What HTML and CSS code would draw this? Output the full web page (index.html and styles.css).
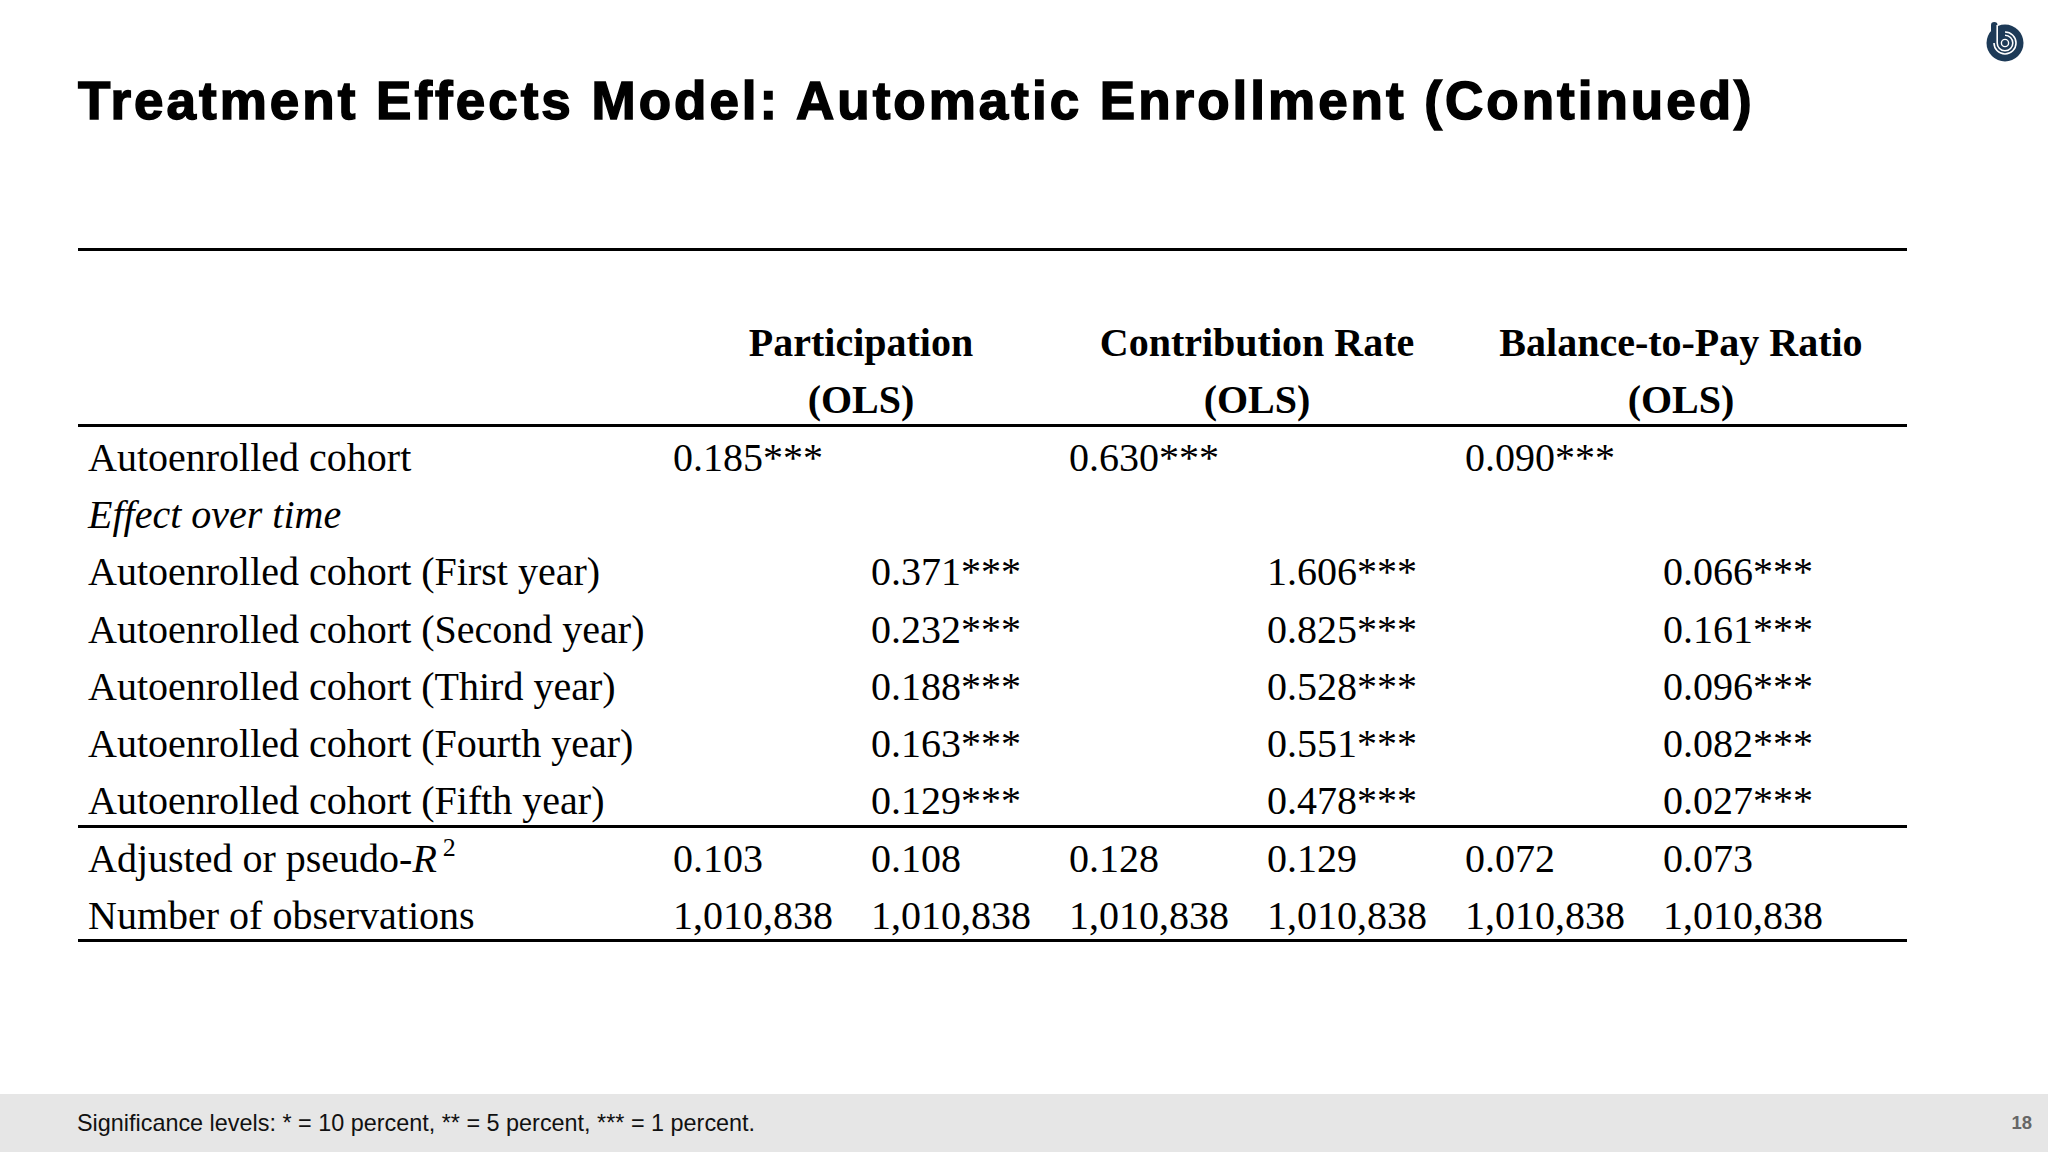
FILE: index.html
```html
<!DOCTYPE html>
<html lang="en">
<head>
<meta charset="utf-8">
<title>Treatment Effects Model: Automatic Enrollment (Continued)</title>
<link rel="stylesheet" href="styles.css">
</head>
<body>
<div class="slide">
  <header class="top">
    <h1 class="title">Treatment Effects Model: Automatic Enrollment (Continued)</h1>
    <svg class="logo" viewBox="0 0 44 48" width="44" height="48" aria-label="logo">
      <rect x="7" y="6" width="6.5" height="24" rx="3.2" fill="#1d3a57"/>
      <circle cx="21" cy="27" r="18.5" fill="#1d3a57"/>
      <path d="M13.2 9 L13.2 27 A7.8 7.8 0 1 0 21 19.2" fill="none" stroke="#ffffff" stroke-width="1.6"/>
      <path d="M10 27 A11 11 0 1 0 21 16" fill="none" stroke="#ffffff" stroke-width="1.6"/>
      <circle cx="21" cy="27" r="3.6" fill="none" stroke="#ffffff" stroke-width="1.4"/>
    </svg>
  </header>

  <main class="content">
    <div class="reg-table">
      <div class="thead">
        <div class="hcell c-part">Participation<br>(OLS)</div>
        <div class="hcell c-contrib">Contribution Rate<br>(OLS)</div>
        <div class="hcell c-bal">Balance-to-Pay Ratio<br>(OLS)</div>
      </div>
      <div class="tbody">
        <div class="row">
          <div class="cell">Autoenrolled cohort</div>
          <div class="cell">0.185***</div><div class="cell"></div>
          <div class="cell">0.630***</div><div class="cell"></div>
          <div class="cell">0.090***</div><div class="cell"></div>
        </div>
        <div class="row">
          <div class="cell"><em>Effect over time</em></div>
        </div>
        <div class="row">
          <div class="cell">Autoenrolled cohort (First year)</div>
          <div class="cell"></div><div class="cell">0.371***</div>
          <div class="cell"></div><div class="cell">1.606***</div>
          <div class="cell"></div><div class="cell">0.066***</div>
        </div>
        <div class="row">
          <div class="cell">Autoenrolled cohort (Second year)</div>
          <div class="cell"></div><div class="cell">0.232***</div>
          <div class="cell"></div><div class="cell">0.825***</div>
          <div class="cell"></div><div class="cell">0.161***</div>
        </div>
        <div class="row">
          <div class="cell">Autoenrolled cohort (Third year)</div>
          <div class="cell"></div><div class="cell">0.188***</div>
          <div class="cell"></div><div class="cell">0.528***</div>
          <div class="cell"></div><div class="cell">0.096***</div>
        </div>
        <div class="row">
          <div class="cell">Autoenrolled cohort (Fourth year)</div>
          <div class="cell"></div><div class="cell">0.163***</div>
          <div class="cell"></div><div class="cell">0.551***</div>
          <div class="cell"></div><div class="cell">0.082***</div>
        </div>
        <div class="row">
          <div class="cell">Autoenrolled cohort (Fifth year)</div>
          <div class="cell"></div><div class="cell">0.129***</div>
          <div class="cell"></div><div class="cell">0.478***</div>
          <div class="cell"></div><div class="cell">0.027***</div>
        </div>
      </div>
      <div class="tfoot">
        <div class="row">
          <div class="cell">Adjusted or pseudo-<i>R</i><sup class="sq">2</sup></div>
          <div class="cell">0.103</div><div class="cell">0.108</div>
          <div class="cell">0.128</div><div class="cell">0.129</div>
          <div class="cell">0.072</div><div class="cell">0.073</div>
        </div>
        <div class="row">
          <div class="cell">Number of observations</div>
          <div class="cell">1,010,838</div><div class="cell">1,010,838</div>
          <div class="cell">1,010,838</div><div class="cell">1,010,838</div>
          <div class="cell">1,010,838</div><div class="cell">1,010,838</div>
        </div>
      </div>
    </div>
  </main>

  <footer class="foot">
    <span class="note">Significance levels: * = 10 percent, ** = 5 percent, *** = 1 percent.</span>
    <span class="page">18</span>
  </footer>
</div>
</body>
</html>
```
FILE: styles.css
```css
* { box-sizing: border-box; }
html, body { margin: 0; padding: 0; background: #ffffff; }

.slide {
  width: 2048px;
  height: 1152px;
  display: flex;
  flex-direction: column;
  background: #ffffff;
  overflow: hidden;
}

.top {
  height: 131px;
  display: flex;
  justify-content: space-between;
  align-items: flex-start;
  padding: 16px 20px 0 78px;
}

.title {
  margin: 55px 0 0 0;
  font-family: "Liberation Sans", Arial, sans-serif;
  font-weight: 700;
  font-size: 53px;
  line-height: 60px;
  letter-spacing: 3px;
  color: #000;
  -webkit-text-stroke: 1.5px #000;
  white-space: nowrap;
}

.logo { display: block; flex: none; }

.content {
  padding: 117px 0 0 78px;
}

.reg-table {
  width: 1829px;
  font-family: "Liberation Serif", "Times New Roman", serif;
  font-size: 40px;
  color: #000;
}

.thead, .row {
  display: grid;
  grid-template-columns: 585px repeat(6, 198px) 1fr;
}

.thead {
  height: 179px;
  border-top: 3px solid #000;
  border-bottom: 3px solid #000;
}

.hcell {
  padding-top: 63px;
  line-height: 57px;
  font-weight: 700;
  text-align: center;
  white-space: nowrap;
}
.c-part { grid-column: 2 / 4; }
.c-contrib { grid-column: 4 / 6; }
.c-bal { grid-column: 6 / 9; }

.tbody, .tfoot {
  padding-top: 2px;
  border-bottom: 3px solid #000;
}

.row { height: 57.2px; line-height: 57.2px; }
.tbody .row:last-child { height: 53px; }
.tfoot .row:last-child { height: 52px; }

.cell {
  padding-left: 10px;
  white-space: nowrap;
}

.sq {
  font-size: 26px;
  line-height: 0;
  vertical-align: 16px;
  margin-left: 6px;
}

.foot {
  margin-top: auto;
  height: 58px;
  background: #e6e6e6;
  display: flex;
  align-items: center;
  justify-content: space-between;
  padding: 0 16px 0 77px;
  font-family: "Liberation Sans", Arial, sans-serif;
}

.note {
  font-size: 23.4px;
  color: #111;
}

.page {
  font-size: 18.5px;
  font-weight: 700;
  color: #666;
}
```
